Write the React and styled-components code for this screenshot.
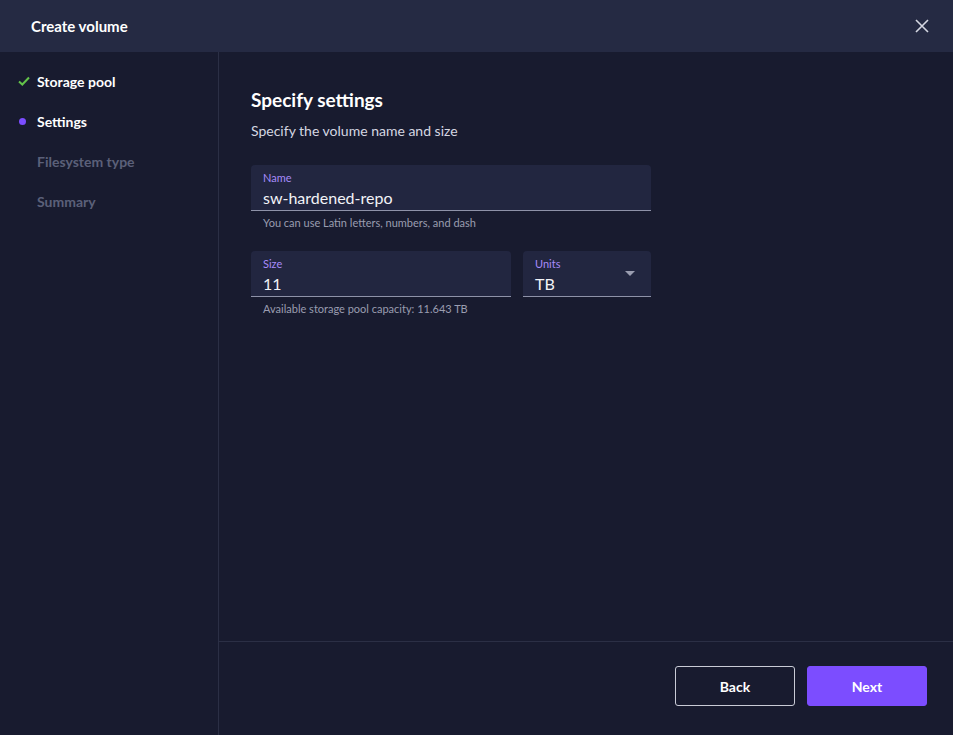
import React from "react";
import styled, { createGlobalStyle } from "styled-components";

const Global = createGlobalStyle`
  html, body { margin: 0; height: 100%; background: #181b2f; }
  body { font-family: Lato, "Noto Sans", sans-serif; color: #fff; }
  #root { height: 100%; }
`;

const Dialog = styled.div`
  height: 735px;
  display: flex;
  flex-direction: column;
  background: #181b2f;
`;
const Header = styled.div`
  height: 52px;
  flex: none;
  background: #252a43;
  display: flex;
  align-items: center;
  justify-content: space-between;
  padding: 0 24px 0 31px;
  font-weight: 700;
  font-size: 15px;
`;
const Close = styled.button`
  background: none;
  border: 0;
  padding: 0;
  display: flex;
  cursor: pointer;
`;
const Body = styled.div`
  flex: 1;
  display: flex;
  min-height: 0;
`;
const Sidebar = styled.div`
  width: 218px;
  flex: none;
  border-right: 1px solid #2b2f45;
  padding-top: 19px;
  display: flex;
  flex-direction: column;
  gap: 20px;
`;
const Step = styled.div`
  display: flex;
  align-items: center;
  height: 20px;
  padding-left: 18px;
  font-size: 14px;
  font-weight: 700;
  color: ${p => (p.muted ? "#5b6079" : "#fff")};
`;
const Marker = styled.span`
  width: 19px;
  display: flex;
  align-items: center;
`;
const Dot = styled.span`
  width: 7px;
  height: 7px;
  border-radius: 50%;
  background: #7b4dff;
  margin-left: 1px;
`;
const Main = styled.div`
  flex: 1;
  display: flex;
  flex-direction: column;
`;
const Content = styled.div`
  flex: 1;
  padding: 36px 32px;
`;
const Title = styled.h2`
  margin: 0;
  font-size: 19px;
  font-weight: 700;
`;
const Sub = styled.p`
  margin: 11px 0 26px;
  font-size: 14px;
  color: #d5d7e2;
`;
const Row = styled.div`
  display: flex;
  gap: 12px;
  width: 400px;
`;
const FieldWrap = styled.div`
  width: ${p => p.w}px;
  margin-bottom: ${p => p.mb || 0}px;
`;
const Field = styled.div`
  position: relative;
  height: 46px;
  background: #222640;
  border-radius: 4px 4px 0 0;
  border-bottom: 1px solid #8e92a8;
  padding: 6px 12px 0;
  box-sizing: border-box;
`;
const Label = styled.div`
  font-size: 11px;
  color: #a78bfa;
  line-height: 13px;
`;
const Value = styled.div`
  font-size: 16px;
  margin-top: 4px;
  color: #f2f3f7;
`;
const Hint = styled.div`
  font-size: 11px;
  color: #9a9db0;
  padding: 5px 12px 0;
`;
const Caret = styled.span`
  position: absolute;
  right: 16px;
  top: 20px;
  width: 0;
  height: 0;
  border-left: 5px solid transparent;
  border-right: 5px solid transparent;
  border-top: 5px solid #9a9db0;
`;
const Footer = styled.div`
  height: 94px;
  flex: none;
  border-top: 1px solid #2b2f45;
  display: flex;
  justify-content: flex-end;
  align-items: flex-start;
  padding: 24px 26px 0;
  gap: 12px;
  box-sizing: border-box;
`;
const Button = styled.button`
  width: 120px;
  height: 40px;
  border-radius: 3px;
  font-family: inherit;
  font-size: 14px;
  font-weight: 700;
  color: #fff;
  cursor: pointer;
  background: ${p => (p.primary ? "#7c4dff" : "transparent")};
  border: 1px solid ${p => (p.primary ? "#7c4dff" : "#c9cbd6")};
`;

export default function App() {
  return (
    <Dialog>
      <Global />
      <Header>
        Create volume
        <Close>
          <svg width="14" height="14" viewBox="0 0 14 14">
            <path d="M1 1L13 13M13 1L1 13" stroke="#d5d7e2" strokeWidth="1.6" />
          </svg>
        </Close>
      </Header>
      <Body>
        <Sidebar>
          <Step>
            <Marker>
              <svg width="12" height="10" viewBox="0 0 12 10">
                <path d="M1 5.5L4.3 8.5L11 1.5" fill="none" stroke="#63c34a" strokeWidth="2" />
              </svg>
            </Marker>
            Storage pool
          </Step>
          <Step>
            <Marker><Dot /></Marker>
            Settings
          </Step>
          <Step muted><Marker />Filesystem type</Step>
          <Step muted><Marker />Summary</Step>
        </Sidebar>
        <Main>
          <Content>
            <Title>Specify settings</Title>
            <Sub>Specify the volume name and size</Sub>
            <FieldWrap w={400} mb={22}>
              <Field>
                <Label>Name</Label>
                <Value>sw-hardened-repo</Value>
              </Field>
              <Hint>You can use Latin letters, numbers, and dash</Hint>
            </FieldWrap>
            <Row>
              <FieldWrap w={260}>
                <Field>
                  <Label>Size</Label>
                  <Value>11</Value>
                </Field>
                <Hint>Available storage pool capacity: 11.643 TB</Hint>
              </FieldWrap>
              <FieldWrap w={128}>
                <Field>
                  <Label>Units</Label>
                  <Value>TB</Value>
                  <Caret />
                </Field>
              </FieldWrap>
            </Row>
          </Content>
          <Footer>
            <Button>Back</Button>
            <Button primary>Next</Button>
          </Footer>
        </Main>
      </Body>
    </Dialog>
  );
}
